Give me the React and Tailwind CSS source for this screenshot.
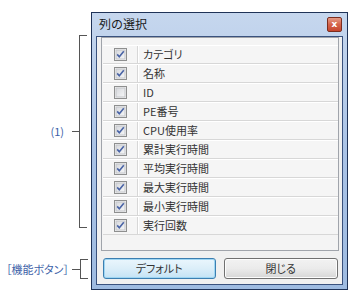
import React from 'react'

const columns = [
    { name: 'カテゴリ', checked: true },
    { name: '名称', checked: true },
    { name: 'ID', checked: false },
    { name: 'PE番号', checked: true },
    { name: 'CPU使用率', checked: true },
    { name: '累計実行時間', checked: true },
    { name: '平均実行時間', checked: true },
    { name: '最大実行時間', checked: true },
    { name: '最小実行時間', checked: true },
    { name: '実行回数', checked: true },
]

const font = "font-['Noto_Sans_CJK_JP',sans-serif]"

const CheckBox = ({ checked }) => (
    <svg width="13" height="13" viewBox="0 0 13 13">
        <defs>
            <linearGradient id="cbFill" x1="0" y1="0" x2="1" y2="1">
                <stop offset="0" stopColor="#d6d8dc" />
                <stop offset="1" stopColor="#f6f7f8" />
            </linearGradient>
        </defs>
        <rect x="0.5" y="0.5" width="12" height="12" fill="#f4f4f4" stroke="#8e8f8f" />
        <rect x="2" y="2" width="9" height="9" fill="url(#cbFill)" stroke="#c3c5c9" strokeWidth="1" />
        {checked && (
            <path d="M3.2 6.4 L5.3 8.8 L9.8 3.2" fill="none" stroke="#4a64a6" strokeWidth="1.6" />
        )}
    </svg>
)

const App = () => {
    return (
        <div className={`w-[353px] h-[302px] bg-white flex pt-[12px] ${font}`}>
            {/* annotations */}
            <div className="w-[91px] flex-none flex flex-col">
                <div className="mt-[23px] h-[193px] flex items-center">
                    <div className="w-[72px] text-right pr-[8px] text-[11px] leading-none text-[#3d5fa8]">(1)</div>
                    <div className="w-[7px] h-px bg-[#555]" />
                    <div className="w-[8px] h-full border-l border-y border-[#555]" />
                </div>
                <div className="mt-[31px] h-[20px] flex items-center">
                    <div className="w-[72px] text-right pr-[3px] text-[11px] leading-none text-[#3d5fa8] whitespace-nowrap [font-feature-settings:'palt']">［機能ボタン］</div>
                    <div className="w-[8px] h-px bg-[#555]" />
                    <div className="w-[8px] h-full border-l border-y border-[#555]" />
                </div>
            </div>

            {/* dialog */}
            <div className="w-[257px] h-[278px] flex-none border border-[#1f3358] bg-gradient-to-b from-[#c6d7ee] via-[#aac3e6] to-[#9ebbe1] px-[4px] pb-[4px] flex flex-col">
                <div className="h-[23px] flex items-start justify-between">
                    <div className="pl-[3px] pt-[3px] text-[12px] leading-[16px] text-[#1a1a1a]">列の選択</div>
                    <div className="mt-[4px] mr-[1px] w-[15px] h-[15px] rounded-[2px] border border-[#7b2d1f] bg-gradient-to-b from-[#e49a86] via-[#d4634a] to-[#c7452d] flex items-center justify-center">
                        <span className="text-white text-[9px] font-bold leading-none font-['DejaVu_Sans',sans-serif]">x</span>
                    </div>
                </div>
                <div className="flex-1 border border-[#3a527e] bg-[#f0f0f0] flex flex-col">
                    <div className="ml-[4px] mr-[3px] h-[214px] border border-[#a0a4ab] bg-[#f4f4f4] pt-[7px] pl-px">
                        {columns.map((c) => (
                            <div key={c.name} className="h-[19px] flex border-t border-white border-b border-b-[#d7d7d7] bg-[#f5f5f5]">
                                <div className="w-[35px] flex items-center justify-center border-r border-[#d7d7d7]">
                                    <CheckBox checked={c.checked} />
                                </div>
                                <div className="flex-1 flex items-center pl-[4px] border-l border-white text-[11px] leading-none text-[#333] [font-feature-settings:'palt']">
                                    {c.name}
                                </div>
                            </div>
                        ))}
                    </div>
                    <div className="mt-[7px] ml-[6px] mr-[4px] flex gap-[8px] text-[11px] [font-feature-settings:'palt'] text-[#333]">
                        <button className="w-[113px] h-[21px] rounded-[3px] border border-[#3c7fb1] bg-gradient-to-b from-[#eaf6fd] via-[#dbeef9] to-[#c4e3f5] shadow-[inset_0_0_0_1px_#9fd6f3] leading-none">
                            デフォルト
                        </button>
                        <button className="w-[115px] h-[21px] rounded-[3px] border border-[#707070] bg-gradient-to-b from-[#f2f2f2] via-[#ebebeb] to-[#d6d6d6] shadow-[inset_0_0_0_1px_#fcfcfc] leading-none">
                            閉じる
                        </button>
                    </div>
                </div>
            </div>
        </div>
    )
}

export default App
